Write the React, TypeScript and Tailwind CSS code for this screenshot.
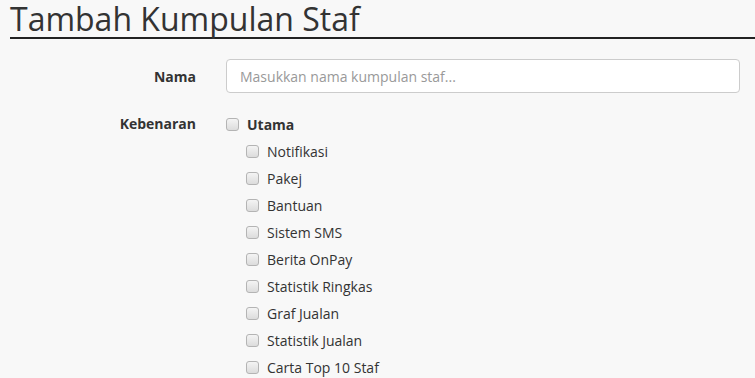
import React from "react";

const items = [
  "Notifikasi",
  "Pakej",
  "Bantuan",
  "Sistem SMS",
  "Berita OnPay",
  "Statistik Ringkas",
  "Graf Jualan",
  "Statistik Jualan",
  "Carta Top 10 Staf",
];

function Box() {
  return (
    <span className="inline-block w-[13px] h-[13px] rounded-[3px] border border-[#b4b4b4] bg-gradient-to-b from-[#f4f4f4] to-[#dcdcdc] shrink-0" />
  );
}

export default function App() {
  return (
    <div
      className="w-[755px] h-[378px] overflow-hidden bg-[#f8f8f8] text-[#333]"
      style={{ fontFamily: '"Open Sans", sans-serif' }}
    >
      <div className="pl-[10px]">
        <h1 className="text-[32px] leading-[37px] font-normal text-[#333] whitespace-nowrap">
          Tambah Kumpulan Staf
        </h1>
        <div className="h-[2px] bg-[#222]" />
      </div>
      <div className="mt-[20px] flex flex-col">
        <div className="flex items-center">
          <label className="w-[196px] text-right text-[14px] font-bold">Nama</label>
          <input
            className="ml-[30px] w-[514px] h-[34px] rounded-[4px] border border-[#ccc] bg-white px-[13px] text-[14px] placeholder:text-[#999] outline-none"
            placeholder="Masukkan nama kumpulan staf..."
          />
        </div>
        <div className="flex mt-[21px]">
          <div className="w-[196px] text-right text-[14px] font-bold leading-[20px]">Kebenaran</div>
          <div className="ml-[30px] flex flex-col">
            <div className="flex items-center h-[20px] gap-[8px]">
              <Box />
              <span className="text-[14px] font-bold">Utama</span>
            </div>
            <div className="flex flex-col pl-[20px] mt-[7px] gap-[7px]">
              {items.map((t) => (
                <div key={t} className="flex items-center h-[20px] gap-[8px]">
                  <Box />
                  <span className="text-[14px]">{t}</span>
                </div>
              ))}
            </div>
          </div>
        </div>
      </div>
    </div>
  );
}
